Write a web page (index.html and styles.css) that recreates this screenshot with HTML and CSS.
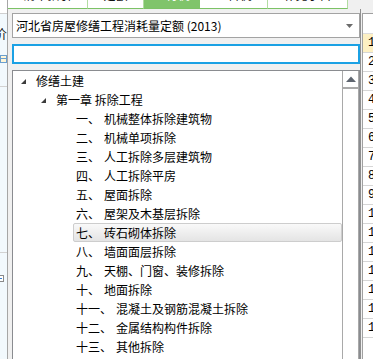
FILE: index.html
```html
<!DOCTYPE html>
<html lang="zh-CN">
<head>
<meta charset="utf-8">
<title>定额库</title>
<link rel="stylesheet" href="styles.css">
</head>
<body>
<div class="left-strip">
  <div class="ls-top"></div>
  <div class="ls-body">
    <div class="ls-label">价</div>
    <svg class="ls-icon" width="10" height="10" viewBox="0 0 10 10"><rect x="0.5" y="1.5" width="9" height="7" fill="#fff6d8" stroke="#6a9fd0"/><line x1="0" y1="4.5" x2="10" y2="4.5" stroke="#6a9fd0"/><line x1="3.5" y1="1" x2="3.5" y2="9" stroke="#6a9fd0"/></svg>
    <div class="ls-line l1"></div>
    <div class="ls-line l2"></div>
    <svg class="ls-minus" width="8" height="7" viewBox="0 0 8 7"><rect x="-3.5" y="0.5" width="7" height="6" fill="#fff" stroke="#8a8a8a"/><line x1="0" y1="3.5" x2="2" y2="3.5" stroke="#3a7fd0"/></svg>
  </div>
</div>
<div class="main">
  <div class="tabs">
    <div class="tab t1"><span>清单指引</span></div>
    <div class="tab t2"><span>定额</span></div>
    <div class="tab t3 active"><span>人材机</span></div>
    <div class="tab t4"><span>工料机</span></div>
    <div class="tab t5"><span>补充子目</span></div>
    <div class="tab-fill"></div>
  </div>
  <div class="panel">
    <div class="combo">
      <span class="combo-text">河北省房屋修缮工程消耗量定额 (2013)</span>
      <svg class="combo-arrow" width="7" height="4" viewBox="0 0 7 4"><polygon points="0,0 7,0 3.5,4" fill="#6b6b6b"/></svg>
    </div>
    <div class="search"></div>
    <div class="tree">
      <div class="rows">
        <div class="row l0"><svg class="exp" width="6" height="6" viewBox="0 0 6 6"><polygon points="5,0 5,5 0,5" fill="#3c3c3c"/></svg><span>修缮土建</span></div>
        <div class="row l1"><svg class="exp" width="6" height="6" viewBox="0 0 6 6"><polygon points="5,0 5,5 0,5" fill="#3c3c3c"/></svg><span>第一章 拆除工程</span></div>
        <div class="row l2"><div class="item"><span class="num">一、</span><span>机械整体拆除建筑物</span></div></div>
        <div class="row l2"><div class="item"><span class="num">二、</span><span>机械单项拆除</span></div></div>
        <div class="row l2"><div class="item"><span class="num">三、</span><span>人工拆除多层建筑物</span></div></div>
        <div class="row l2"><div class="item"><span class="num">四、</span><span>人工拆除平房</span></div></div>
        <div class="row l2"><div class="item"><span class="num">五、</span><span>屋面拆除</span></div></div>
        <div class="row l2"><div class="item"><span class="num">六、</span><span>屋架及木基层拆除</span></div></div>
        <div class="row l2"><div class="item selected"><span class="num">七、</span><span>砖石砌体拆除</span></div></div>
        <div class="row l2"><div class="item"><span class="num">八、</span><span>墙面面层拆除</span></div></div>
        <div class="row l2"><div class="item"><span class="num">九、</span><span>天棚、门窗、装修拆除</span></div></div>
        <div class="row l2"><div class="item"><span class="num">十、</span><span>地面拆除</span></div></div>
        <div class="row l2"><div class="item"><span class="num">十一、</span><span>混凝土及钢筋混凝土拆除</span></div></div>
        <div class="row l2"><div class="item"><span class="num">十二、</span><span>金属结构构件拆除</span></div></div>
        <div class="row l2"><div class="item"><span class="num">十三、</span><span>其他拆除</span></div></div>
        <div class="row l2"><div class="item"><span class="num">十四、</span><span>拆除材料运输</span></div></div>
      </div>
      <div class="scrollbar">
        <div class="sb-up"><svg width="10" height="6" viewBox="0 0 10 6"><polygon points="0,6 10,6 5,0.5" fill="#5f6670"/></svg></div>
      </div>
    </div>
  </div>
</div>
<div class="right">
  <div class="grid">
    <div class="g-head"></div>
    <div class="g-row sel">1</div>
    <div class="g-row">2</div>
    <div class="g-row">3</div>
    <div class="g-row">4</div>
    <div class="g-row">5</div>
    <div class="g-row">6</div>
    <div class="g-row">7</div>
    <div class="g-row">8</div>
    <div class="g-row">9</div>
    <div class="g-row">10</div>
    <div class="g-row">11</div>
    <div class="g-row">12</div>
    <div class="g-row">13</div>
    <div class="g-row">14</div>
    <div class="g-row">15</div>
    <div class="g-row">16</div>
  </div>
</div>
</body>
</html>
```

FILE: styles.css
```css
* { box-sizing: border-box; }
html, body { margin: 0; padding: 0; }
body {
  width: 373px;
  height: 359px;
  overflow: hidden;
  display: flex;
  background: #f0f0f0;
  font-family: "Noto Sans CJK SC", "Noto Sans", sans-serif;
  font-size: 12px;
  color: #000;
}

/* left strip */
.left-strip {
  width: 8px;
  flex: none;
  border-right: 1px solid #a6a6a6;
  display: flex;
  flex-direction: column;
  overflow: hidden;
}
.ls-top {
  height: 14px;
  flex: none;
  background: #fff;
  border-bottom: 1px solid #cfcfcf;
}
.ls-body {
  flex: 1;
  background: #f2f9fd;
  display: flex;
  flex-direction: column;
}
.ls-label {
  margin-top: 11px;
  margin-left: -6px;
  font-size: 13px;
  line-height: 15px;
  height: 15px;
  color: #222;
}
.ls-icon {
  display: block;
  margin-top: 14px;
  margin-left: -3px;
}
.ls-line {
  height: 1px;
  background: #d2d2d2;
}
.ls-line.l1 { margin-top: 22px; }
.ls-line.l2 { margin-top: 165px; }
.ls-minus {
  display: block;
  margin-top: 22px;
}

/* main panel */
.main {
  width: 353px;
  flex: none;
  display: flex;
  flex-direction: column;
}
.tabs {
  height: 9px;
  flex: none;
  display: flex;
}
.tab {
  background: #fff;
  border-bottom: 1px solid #7cc266;
  border-right: 1px solid #b2dca2;
  overflow: hidden;
  display: flex;
  justify-content: center;
}
.tab span {
  display: block;
  font-size: 12px;
  line-height: 14px;
  margin-top: -12px;
  color: #111;
  white-space: nowrap;
}
.t1 { width: 80px; }
.t2 { width: 56px; }
.t3 { width: 56px; }
.t4 { width: 68px; }
.t5 { width: 80px; }
.tab.active {
  background: #80c46b;
  border-right-color: #80c46b;
}
.tab.active span { color: #fff; }
.tab-fill { flex: 1; }

.panel {
  flex: 1;
  min-height: 0;
  display: flex;
  flex-direction: column;
  padding: 4px 0 0 4px;
  border-right: 1px solid #8f8f8f;
}
.combo {
  height: 25px;
  flex: none;
  background: #fff;
  border: 1px solid #a3a3a3;
  display: flex;
  align-items: center;
  padding: 0 6px 0 3px;
}
.combo-text {
  flex: 1;
  line-height: 16px;
  white-space: nowrap;
}
.combo-arrow { display: block; }
.search {
  height: 20px;
  flex: none;
  margin-top: 6px;
  background: #fff;
  border: 2px solid #1ba1e4;
}
.tree {
  flex: 1;
  min-height: 0;
  margin-top: 6px;
  background: #fff;
  border: 1px solid #8a8c90;
  border-bottom: none;
  display: flex;
}
.rows {
  flex: 1;
  min-width: 0;
  padding-top: 0;
}
.row {
  height: 19px;
  display: flex;
  align-items: center;
  white-space: nowrap;
}
.row.l0 { padding-left: 8px; }
.row.l1 { padding-left: 28px; }
.exp {
  display: block;
  width: 15px;
  height: 6px;
  padding-right: 9px;
  margin-top: 2px;
  flex: none;
}
.row.l2 { padding-left: 60px; }
.item {
  flex: 1;
  height: 19px;
  display: flex;
  align-items: center;
  padding-left: 2px;
  border: 1px solid transparent;
  border-radius: 2px;
}
.item.selected {
  border-color: #cdcdcd;
  background: linear-gradient(#f9f9f9, #e4e4e4);
}
.num { margin-right: 4px; }

.scrollbar {
  width: 17px;
  flex: none;
  border-left: 1px solid #a9a9a9;
  border-right: 1px solid #a9a9a9;
  background: #fff;
}
.sb-up {
  height: 18px;
  border-bottom: 2px solid #a9a9a9;
  display: flex;
  align-items: center;
  justify-content: center;
}
.sb-up svg { display: block; }

/* right grid */
.right {
  flex: 1;
  min-width: 0;
  padding: 13px 0 0 1px;
  overflow: hidden;
}
.grid {
  height: 100%;
  background: #fff;
  border-left: 1px solid #a0a0a0;
  border-top: 1px solid #a0a0a0;
}
.g-head { height: 20px; border-bottom: 1px solid #dcdcdc; }
.g-row {
  height: 19px;
  border-bottom: 1px solid #d6d6d6;
  padding-left: 5px;
  font-family: "Liberation Mono", monospace;
  font-size: 12px;
  line-height: 18px;
  white-space: nowrap;
}
.g-row.sel { background: #fdf0c3; }
```
